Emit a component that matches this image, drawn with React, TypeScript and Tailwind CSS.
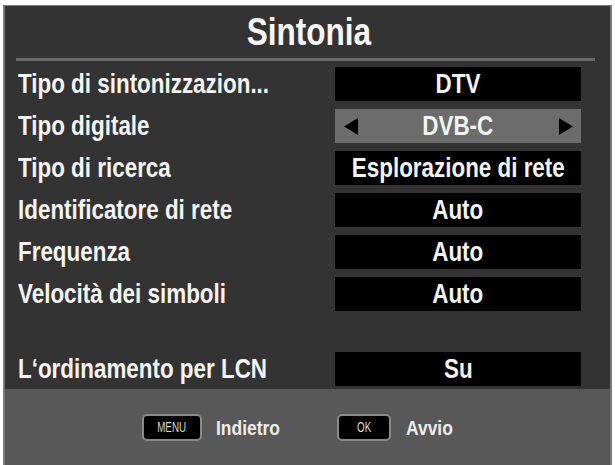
import React from "react";

const font = { fontFamily: '"Liberation Sans", Arial, sans-serif' };

// the TV menu uses a narrow face; squeeze Liberation Sans to match
function Narrow({ children, origin = "origin-left" }: { children: React.ReactNode; origin?: string }) {
  return <span className={`inline-block whitespace-nowrap scale-x-[0.83] ${origin}`}>{children}</span>;
}

function Row({ label, value, grey = false }: { label: string; value: string; grey?: boolean }) {
  return (
    <div className="flex h-[34px] items-center">
      <div className="w-[330px] pl-[13px] text-[27px] font-bold leading-none text-[#f4f4f4]">
        <Narrow>{label}</Narrow>
      </div>
      <div
        className={`relative flex h-[34px] w-[246px] items-center justify-center text-[27px] font-bold leading-none text-[#f4f4f4] ${
          grey ? "bg-[#6c6c6c]" : "bg-black"
        }`}
      >
        {grey && (
          <svg className="absolute left-[9px] top-[9px]" width="14" height="17" viewBox="0 0 14 17">
            <polygon points="14,0 14,17 0,8.5" fill="#000" />
          </svg>
        )}
        <Narrow origin="origin-center">{value}</Narrow>
        {grey && (
          <svg className="absolute right-[8px] top-[9px]" width="14" height="17" viewBox="0 0 14 17">
            <polygon points="0,0 0,17 14,8.5" fill="#000" />
          </svg>
        )}
      </div>
    </div>
  );
}

function Key({ label, width }: { label: string; width: string }) {
  return (
    <div
      className={`flex h-[27px] ${width} items-center justify-center rounded-[5px] border-2 border-[#8a8a8a] bg-black text-[14px] leading-none text-[#d8d8d8]`}
    >
      <span className="inline-block scale-x-[0.7] origin-center">{label}</span>
    </div>
  );
}

export default function App() {
  const rows = [
    { label: "Tipo di sintonizzazion...", value: "DTV" },
    { label: "Tipo digitale", value: "DVB-C", grey: true },
    { label: "Tipo di ricerca", value: "Esplorazione di rete" },
    { label: "Identificatore di rete", value: "Auto" },
    { label: "Frequenza", value: "Auto" },
    { label: "Velocità dei simboli", value: "Auto" },
  ];

  return (
    <div className="h-[465px] w-[615px] overflow-hidden bg-white pl-[3px] pr-[3px] pt-[5px]" style={font}>
      <div className="flex h-full flex-col border-l-2 border-r-2 border-t border-[#7a7a7a] bg-[#333333]">
        <div className="flex h-[52px] items-center justify-center pl-[2px] text-[38px] font-bold leading-none text-[#f6f6f6]">
          <Narrow origin="origin-center">Sintonia</Narrow>
        </div>
        <div className="ml-[11px] mr-[15px] h-[3px] bg-[#6a6a6a]" />
        <div className="flex flex-col gap-[8px] pt-[6px]">
          {rows.map((r) => (
            <Row key={r.label} {...r} />
          ))}
          <div className="h-[25px]" />
          <Row label="L‘ordinamento per LCN" value="Su" />
        </div>
        <div className="mt-[3px] flex flex-1 items-center bg-[#585858] pl-[137px]">
          <Key label="MENU" width="w-[60px]" />
          <span className="ml-[14px] text-[21px] font-bold leading-none text-[#ececec]">
            <Narrow>Indietro</Narrow>
          </span>
          <div className="ml-[44px]">
            <Key label="OK" width="w-[54px]" />
          </div>
          <span className="ml-[15px] text-[21px] font-bold leading-none text-[#ececec]">
            <Narrow>Avvio</Narrow>
          </span>
        </div>
      </div>
    </div>
  );
}
